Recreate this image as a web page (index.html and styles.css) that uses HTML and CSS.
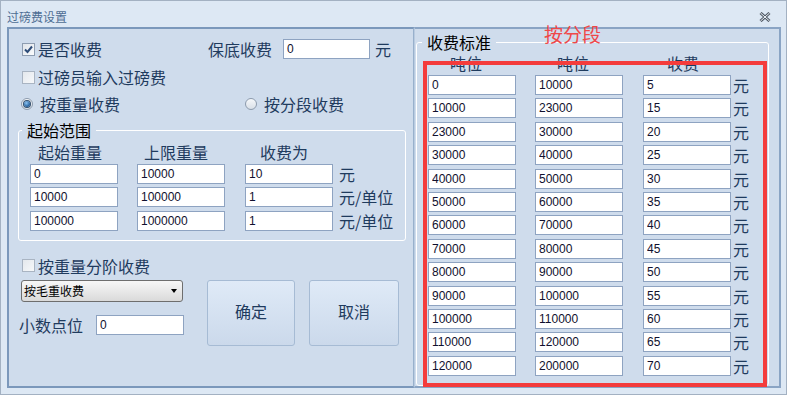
FILE: index.html
```html
<!DOCTYPE html>
<html lang="zh-CN">
<head>
  <meta charset="UTF-8">
  <meta name="viewport" content="width=device-width, initial-scale=1.0">
  <title>过磅费设置</title>
  <link rel="stylesheet" href="styles.css">
</head>
<body>
  <div class="window">
    <div class="titlebar">
      <span class="title">过磅费设置</span>
      <svg class="close" width="12" height="10" viewBox="0 0 12 10">
        <path d="M1.5 1 L10.5 9 M10.5 1 L1.5 9" stroke="#525c68" stroke-width="3" fill="none"/>
        <path d="M1.5 1 L10.5 9 M10.5 1 L1.5 9" stroke="#eef3f9" stroke-width="1" fill="none"/>
      </svg>
    </div>

    <div class="client">
      <!-- 左侧：收费方式 -->
      <div class="left-panel">
        <div class="row">
          <span class="opt opt-fee"><span class="check"><svg width="11" height="11" viewBox="0 0 11 11"><path d="M2 5.5 L4.5 8 L9 2.5" stroke="#2d4c78" stroke-width="2" fill="none"/></svg></span>是否收费</span>
          <span class="lbl">保底收费</span>
          <input class="field min-fee" type="text" value="0">
          <span class="unit">元</span>
        </div>
        <div class="row row-2">
          <span class="opt"><span class="check off"></span>过磅员输入过磅费</span>
        </div>
        <div class="row row-3">
          <span class="opt opt-radio"><span class="radio on"></span>按重量收费</span>
          <span class="opt"><span class="radio"></span>按分段收费</span>
        </div>

        <fieldset class="group range">
          <legend>起始范围</legend>
          <div class="range-grid">
            <span class="head h1">起始重量</span>
            <span class="head h2">上限重量</span>
            <span class="head h3">收费为</span>
            <span></span>
            <input class="field" type="text" value="0">
            <input class="field" type="text" value="10000">
            <input class="field" type="text" value="10">
            <span class="unit">元</span>
            <input class="field" type="text" value="10000">
            <input class="field" type="text" value="100000">
            <input class="field" type="text" value="1">
            <span class="unit">元/单位</span>
            <input class="field" type="text" value="100000">
            <input class="field" type="text" value="1000000">
            <input class="field" type="text" value="1">
            <span class="unit">元/单位</span>
          </div>
        </fieldset>

        <div class="row row-4">
          <span class="opt"><span class="check off"></span>按重量分阶收费</span>
        </div>

        <div class="bottom">
          <div class="bottom-left">
            <div class="select"><span>按毛重收费</span><span class="arrow"></span></div>
            <div class="decimal">
              <span class="lbl">小数点位</span>
              <input class="field" type="text" value="0">
            </div>
          </div>
          <button class="btn btn-ok">确定</button>
          <button class="btn btn-cancel">取消</button>
        </div>
      </div>

      <!-- 右侧：分段收费标准 -->
      <div class="right-panel">
        <fieldset class="group standard">
          <legend>收费标准</legend>
          <div class="std-head">
            <span class="head s1">吨位</span>
            <span class="head s2">吨位</span>
            <span class="head s3">收费</span>
          </div>
          <div class="std-grid">
            <input class="field" type="text" value="0"><input class="field" type="text" value="10000"><input class="field" type="text" value="5"><span class="unit">元</span>
            <input class="field" type="text" value="10000"><input class="field" type="text" value="23000"><input class="field" type="text" value="15"><span class="unit">元</span>
            <input class="field" type="text" value="23000"><input class="field" type="text" value="30000"><input class="field" type="text" value="20"><span class="unit">元</span>
            <input class="field" type="text" value="30000"><input class="field" type="text" value="40000"><input class="field" type="text" value="25"><span class="unit">元</span>
            <input class="field" type="text" value="40000"><input class="field" type="text" value="50000"><input class="field" type="text" value="30"><span class="unit">元</span>
            <input class="field" type="text" value="50000"><input class="field" type="text" value="60000"><input class="field" type="text" value="35"><span class="unit">元</span>
            <input class="field" type="text" value="60000"><input class="field" type="text" value="70000"><input class="field" type="text" value="40"><span class="unit">元</span>
            <input class="field" type="text" value="70000"><input class="field" type="text" value="80000"><input class="field" type="text" value="45"><span class="unit">元</span>
            <input class="field" type="text" value="80000"><input class="field" type="text" value="90000"><input class="field" type="text" value="50"><span class="unit">元</span>
            <input class="field" type="text" value="90000"><input class="field" type="text" value="100000"><input class="field" type="text" value="55"><span class="unit">元</span>
            <input class="field" type="text" value="100000"><input class="field" type="text" value="110000"><input class="field" type="text" value="60"><span class="unit">元</span>
            <input class="field" type="text" value="110000"><input class="field" type="text" value="120000"><input class="field" type="text" value="65"><span class="unit">元</span>
            <input class="field" type="text" value="120000"><input class="field" type="text" value="200000"><input class="field" type="text" value="70"><span class="unit">元</span>
          </div>
        </fieldset>
      </div>
    </div>

    <!-- 标注 -->
    <div class="mark"></div>
    <span class="mark-label">按分段</span>
  </div>
</body>
</html>
```

FILE: styles.css
```css
body {
  margin: 0;
  font-family: "Noto Sans CJK SC", sans-serif;
}
.window {
  width: 787px;
  height: 395px;
  box-sizing: border-box;
  border: 1px solid #a3b1c2;
  background: #dde8f4;
  position: relative;
}
.titlebar {
  height: 26px;
  box-sizing: border-box;
  padding: 6px 15px 0 6px;
  display: flex;
  align-items: center;
  justify-content: space-between;
}
.title {
  font-size: 12px;
  line-height: 20px;
  color: #4d6d93;
}
.client {
  display: flex;
  height: 361px;
  margin-left: 6px;
}
.left-panel {
  width: 407px;
  box-sizing: border-box;
  background: #cfdcec;
  border: 2px solid #7b98bb;
  border-right: 1px solid #98b0cc;
  padding: 10px 0 0 9px;
}
.right-panel {
  width: 367px;
  box-sizing: border-box;
  background: #cfdcec;
  border: 2px solid #8aa4c4;
  border-left: 1px solid #b9cbe0;
  padding: 2px 10px 0 1px;
}
.row {
  display: flex;
  align-items: center;
  height: 20px;
  padding-left: 4px;
  font-size: 16px;
  color: #1f3b5e;
}
.row-2 { margin-top: 8px; }
.row-3 { margin-top: 7px; }
.row-4 { margin-top: 15px; }
.opt {
  display: flex;
  align-items: center;
  line-height: 20px;
}
.opt-fee { width: 186px; }
.opt-radio { width: 224px; }
.lbl {
  font-size: 16px;
  line-height: 20px;
  color: #1f3b5e;
}
.unit {
  font-size: 16px;
  line-height: 20px;
  color: #1f3b5e;
  margin-left: 5px;
}
.check {
  width: 13px;
  height: 13px;
  box-sizing: border-box;
  border: 1px solid #8e9db1;
  background: linear-gradient(135deg, #dfe4ea, #fbfcfd);
  margin-right: 3px;
  display: flex;
  align-items: center;
  justify-content: center;
}
.check.off {
  border-color: #a9b4c2;
  background: linear-gradient(135deg, #e4e8ed, #f6f8fa);
}
.radio {
  width: 12px;
  height: 12px;
  box-sizing: border-box;
  border-radius: 50%;
  border: 1px solid #8d9bad;
  background: linear-gradient(#f6f8fa, #d9e0e8);
  margin: 0 7px 0 -1px;
  display: flex;
  align-items: center;
  justify-content: center;
}
.radio.on::after {
  content: "";
  width: 6px;
  height: 6px;
  border-radius: 50%;
  background: radial-gradient(circle at 40% 35%, #8cc4f2, #1f5a98 70%);
  box-shadow: 0 0 0 1px #35506e;
}
.field {
  width: 88px;
  height: 20px;
  box-sizing: border-box;
  border: 1px solid #8ea3c1;
  background: #fff;
  padding: 0 3px;
  margin: 0;
  font-family: "Liberation Sans", sans-serif;
  font-size: 12px;
  color: #10102e;
  outline: none;
}
.row .min-fee { margin-left: 11px; width: 87px; }
.group {
  margin: 0;
  border: 1px solid #fff;
  border-radius: 3px;
  box-sizing: border-box;
}
.group legend {
  padding: 0 5px;
  font-size: 16px;
  line-height: 16px;
  color: #000;
}
.range {
  width: 388px;
  margin-top: 8px;
  padding: 5px 0 9px 3px;
}
.range-grid {
  display: grid;
  grid-template-columns: 107px 108px 91px auto;
  row-gap: 3.5px;
  align-items: center;
  margin-left: 8px;
}
.head {
  font-size: 16px;
  line-height: 16px;
  color: #1f3b5e;
}
.range-grid .head { margin: 1px 0 0; }
.range-grid .unit { margin-left: 3px; }
.h1 { padding-left: 8px; }
.h2 { padding-left: 7px; }
.h3 { padding-left: 15px; }
.bottom {
  display: flex;
  align-items: flex-start;
  margin-top: 4px;
  padding-left: 3px;
}
.bottom-left { width: 163px; }
.select {
  width: 162px;
  height: 22px;
  box-sizing: border-box;
  border: 1px solid #6e6e6e;
  border-radius: 3px;
  background: linear-gradient(#f7f7f7, #dadada);
  display: flex;
  align-items: center;
  justify-content: space-between;
  padding: 0 5px 0 2px;
  font-size: 12px;
  color: #000;
}
.arrow {
  width: 0;
  height: 0;
  border-left: 3.5px solid transparent;
  border-right: 3.5px solid transparent;
  border-top: 4px solid #000;
}
.decimal {
  display: flex;
  align-items: center;
  margin: 13px 0 0 -2px;
}
.decimal .field { margin-left: 13px; }
.btn {
  height: 66px;
  box-sizing: border-box;
  border: 1px solid #a6bbd4;
  border-radius: 3px;
  background: linear-gradient(#dfeaf7, #cbd9eb);
  font-family: "Noto Sans CJK SC", sans-serif;
  font-size: 16px;
  color: #1f3b5e;
  padding: 0 0 4px;
}
.btn-ok { width: 88px; margin-left: 23px; }
.btn-cancel { width: 90px; margin-left: 14px; }
.standard {
  width: 353px;
  margin-top: 3px;
  padding: 5px 0 9px 5px;
}
.std-head,
.std-grid {
  display: grid;
  grid-template-columns: 107px 108px 90px auto;
  margin-left: 6px;
  align-items: center;
}
.std-head { margin-bottom: 4px; }
.std-grid { row-gap: 3.4px; }
.std-grid .unit { margin-left: 0; }
.s1, .s2 { padding-left: 22px; }
.s3 { padding-left: 24px; }
.mark {
  position: absolute;
  left: 422px;
  top: 60px;
  width: 344px;
  height: 326px;
  box-sizing: border-box;
  border: 4px solid #f43c3c;
}
.mark-label {
  position: absolute;
  left: 543px;
  top: 22px;
  font-size: 19px;
  line-height: 22px;
  color: #f04848;
}
```
